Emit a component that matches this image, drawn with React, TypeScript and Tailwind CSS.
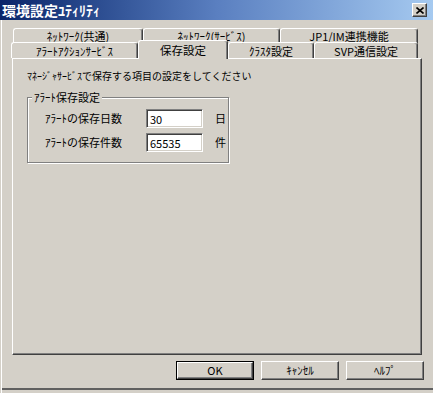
import React from 'react';

const font = { fontFamily: '"Noto Sans CJK JP", "Liberation Sans", sans-serif' };

function BackTab({ label, w }: { label: string; w: string }) {
  return (
    <div
      className={`${w} h-[15px] shrink-0 border-t border-l border-white border-r border-r-[#404040] rounded-t-[3px] shadow-[inset_-1px_0_0_#808080] flex items-center justify-center text-[11px] leading-[13px] text-black`}
    >
      {label}
    </div>
  );
}

function FrontTab({ label, w, selected }: { label: string; w: string; selected?: boolean }) {
  if (selected) {
    return (
      <div
        className={`${w} relative z-10 -mt-[2px] h-[19px] shrink-0 bg-[#d4d0c8] border-t border-l border-white border-r border-r-[#404040] rounded-t-[3px] shadow-[inset_-1px_0_0_#808080] flex items-start justify-center pt-[2px] text-[11.5px] leading-[14px] text-black`}
      >
        {label}
      </div>
    );
  }
  return (
    <div
      className={`${w} h-[16px] shrink-0 border-t border-l border-white border-r border-r-[#404040] rounded-t-[3px] shadow-[inset_-1px_0_0_#808080] flex items-center justify-center text-[11px] leading-[14px] text-black`}
    >
      {label}
    </div>
  );
}

function Field({ value }: { value: string }) {
  return (
    <div className="w-[57px] h-[19px] bg-white border border-t-[#808080] border-l-[#808080] border-b-white border-r-white shadow-[inset_1px_1px_0_#404040,inset_-1px_-1px_0_#d4d0c8] pl-[3px] pt-[2px] text-[11px] leading-[14px] text-black">
      {value}
    </div>
  );
}

function Button({ label, isDefault }: { label: string; isDefault?: boolean }) {
  return (
    <div className={`w-[78px] h-[19px] ${isDefault ? 'border border-black' : ''}`}>
      <div className="h-full w-full border border-t-white border-l-white border-b-[#404040] border-r-[#404040] shadow-[inset_-1px_-1px_0_#808080] flex items-center justify-center text-[11px] leading-[13px] text-black">
        {label}
      </div>
    </div>
  );
}

export default function App() {
  return (
    <div className="w-[433px] h-[393px] bg-[#d4d0c8] overflow-hidden flex flex-col" style={font}>
      {/* title bar */}
      <div className="h-[20px] shrink-0 bg-gradient-to-r from-[#0a246a] via-[#5a7fc0] to-[#a6caf0] flex items-center justify-between pl-[2px] pr-[6px]">
        <span className="text-white font-bold text-[14px] leading-[16px]">環境設定ﾕﾃｨﾘﾃｨ</span>
        <div className="w-[15px] h-[14px] bg-[#d4d0c8] border border-t-white border-l-white border-b-[#404040] border-r-[#404040] shadow-[inset_-1px_-1px_0_#808080] flex items-center justify-center">
          <svg width="8" height="7" viewBox="0 0 8 7">
            <path d="M0.5 0.5 L7.5 6.5 M7.5 0.5 L0.5 6.5" stroke="#000" strokeWidth="1.6" />
          </svg>
        </div>
      </div>

      <div className="flex-1 ml-px border-l border-white flex flex-col">
        {/* tab rows */}
        <div className="mt-[8px] flex pl-[11px]">
          <BackTab label="ﾈｯﾄﾜｰｸ(共通)" w="w-[130px]" />
          <BackTab label="ﾈｯﾄﾜｰｸ(ｻｰﾋﾞｽ)" w="w-[137px]" />
          <BackTab label="JP1/IM連携機能" w="w-[138px]" />
        </div>
        <div className="-mt-px flex pl-[9px] h-[16px]">
          <FrontTab label="ｱﾗｰﾄｱｸｼｮﾝｻｰﾋﾞｽ" w="w-[127px]" />
          <FrontTab label="保存設定" w="w-[90px]" selected />
          <FrontTab label="ｸﾗｽﾀ設定" w="w-[86px]" />
          <FrontTab label="SVP通信設定" w="w-[104px]" />
        </div>

        {/* panel */}
        <div className="ml-[10px] w-[410px] h-[297px] border border-t-white border-l-white border-r-[#404040] border-b-[#404040] shadow-[inset_-1px_-1px_0_#808080] pl-[14px] pt-[10px]">
          <div className="text-[10px] leading-[13px] text-black">ﾏﾈｰｼﾞｬｻｰﾋﾞｽで保存する項目の設定をしてください</div>

          <div className="relative mt-[15px] w-[202px] h-[66px] border border-[#808080] shadow-[inset_1px_1px_0_white,1px_1px_0_white] pt-[11px] pl-[17px]">
            <span className="absolute -top-[8px] left-[4px] bg-[#d4d0c8] px-[2px] text-[11px] leading-[14px] text-black">ｱﾗｰﾄ保存設定</span>
            <div className="flex items-center h-[19px]">
              <span className="w-[101px] text-[11px] leading-[13px] text-black">ｱﾗｰﾄの保存日数</span>
              <Field value="30" />
              <span className="ml-[12px] text-[11px] leading-[13px] text-black">日</span>
            </div>
            <div className="mt-[5px] flex items-center h-[19px]">
              <span className="w-[101px] text-[11px] leading-[13px] text-black">ｱﾗｰﾄの保存件数</span>
              <Field value="65535" />
              <span className="ml-[12px] text-[11px] leading-[13px] text-black">件</span>
            </div>
          </div>
        </div>

        {/* buttons */}
        <div className="mt-[6px] flex justify-end gap-[7px] pr-[9px]">
          <Button label="OK" isDefault />
          <Button label="ｷｬﾝｾﾙ" />
          <Button label="ﾍﾙﾌﾟ" />
        </div>

        <div className="mt-[8px] h-[2px] bg-[#606060]" />
      </div>
    </div>
  );
}
